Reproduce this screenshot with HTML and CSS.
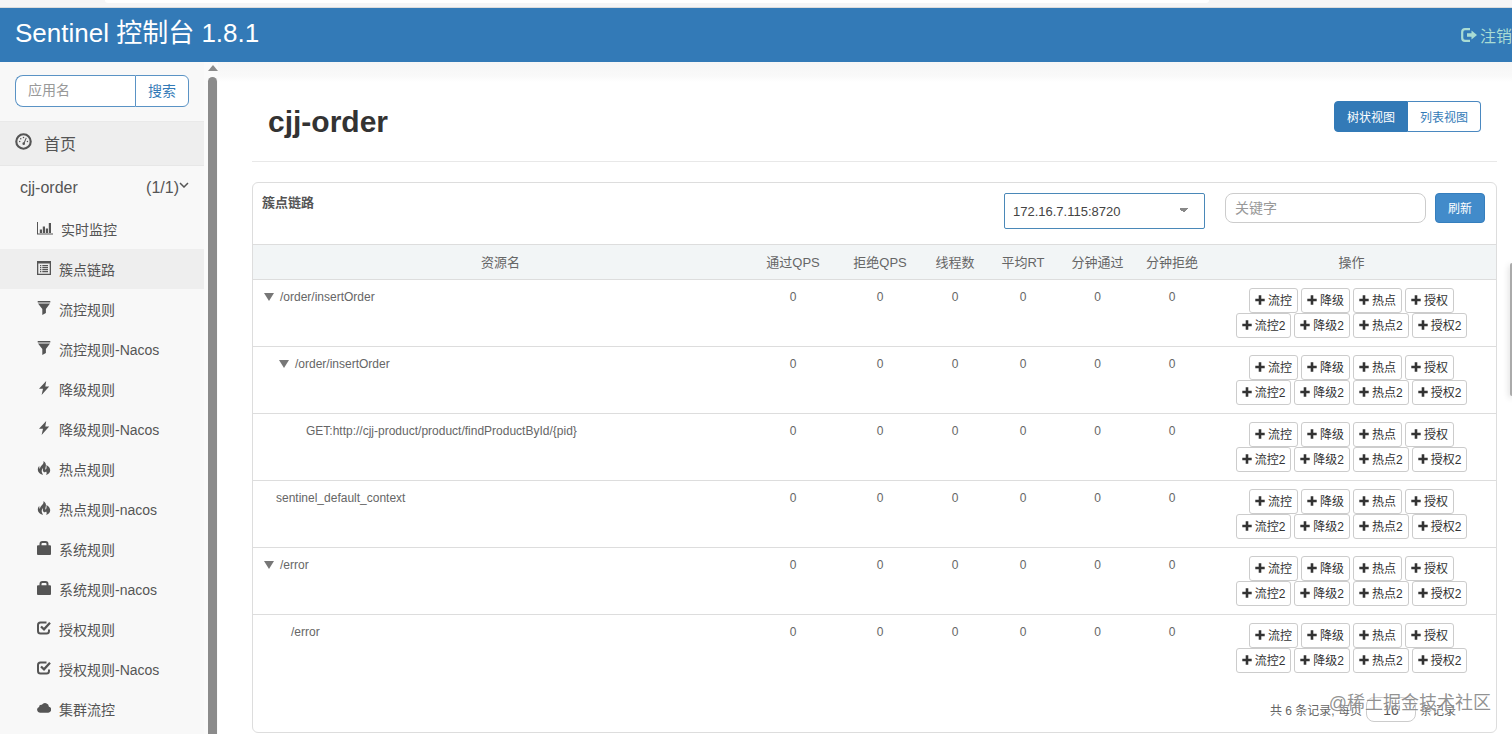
FILE: index.html
```html
<!DOCTYPE html>
<html lang="zh-CN">
<head>
    <meta charset="UTF-8">
    <meta name="viewport" content="width=device-width, initial-scale=1.0">
    <title>Sentinel 控制台</title>
    <link rel="stylesheet" href="styles.css">
</head>
<body>
    <!-- icons -->
    <svg class="sprite" aria-hidden="true">
        <symbol id="i-dashboard" viewBox="0 0 16 16">
            <circle cx="8" cy="8" r="6.8" fill="none" stroke="currentColor" stroke-width="2"/>
            <path d="M8.4 9.8 10.6 4.6" stroke="currentColor" stroke-width="1"/>
            <circle cx="8.2" cy="10" r="1.2"/><circle cx="4.400" cy="8" r=".7"/><circle cx="5.400" cy="5.500" r=".7"/><circle cx="8" cy="4.300" r=".7"/><circle cx="11.700" cy="8" r=".7"/>
        </symbol>
        <symbol id="i-stats" viewBox="0 0 16 14">
            <path d="M0 1h1v11.500h15v1H0zM2.800 8.500h2.200v3.500H2.800zM5.800 5.500H8v6.500H5.800zM8.800 7.500H11v4.500H8.800zM11.800 2H14v10h-2.200z"/>
        </symbol>
        <symbol id="i-list" viewBox="0 0 14 14">
            <path fill-rule="evenodd" d="M0 0h14v14H0zM1.300 2.500v10.200h11.400V2.500z"/>
            <path d="M3 4h1.300v1.200H3zM5.300 4H11v1.200H5.300zM3 6h1.300v1.200H3zM5.300 6H11v1.200H5.300zM3 8h1.300v1.200H3zM5.300 8H11v1.200H5.300zM3 10h1.300v1.200H3zM5.300 10H11v1.200H5.300z"/>
        </symbol>
        <symbol id="i-filter" viewBox="0 0 14 14">
            <path d="M.7 0h12.600v1.600H.7zM1 2.400h12L8.900 8v4L5.300 14V8z"/>
        </symbol>
        <symbol id="i-flash" viewBox="0 0 14 14">
            <path d="M9.200 0 2 7.800h4L4.600 14l7.600-8.600H8.300z"/>
        </symbol>
        <symbol id="i-fire" viewBox="0 0 14 14">
            <path d="M6.400 0C9 1.700 9.300 3.800 8.700 5.700 8.300 7 8.200 8 8.600 8.800c1-.9 1.200-2.700.7-4.900 2.900 1.400 4 3.600 3.900 5.700-.1 2.200-1.600 3.900-4.200 4.400.9-1.200.8-2.400.1-3.500-1 1.300-3 .7-3.200-1.100-.1-.9.100-1.600.1-2.300C4.900 8.200 4.400 10 4.900 11.400c.3 1 .8 1.700 1.400 2.400C3 13.400.8 11.500.8 8.800c0-1.500.6-2.900 1.500-4-.1 1.400 0 2.400.6 3.200C3 6.200 4 4.900 5.300 3.700 6.400 2.700 6.800 1.500 6.400 0z"/>
        </symbol>
        <symbol id="i-lock" viewBox="0 0 14 14">
            <path fill-rule="evenodd" d="M2.500 4.300V3Q2.500 0 5.500 0h3q3 0 3 3v1.300H13q1 0 1 1V13q0 1-1 1H1q-1 0-1-1V5.300q0-1 1-1zM4.500 4.300h5V3q0-1-1-1h-3q-1 0-1 1z"/>
        </symbol>
        <symbol id="i-check" viewBox="0 0 14 14">
            <path d="M9.500 1.500H3.500Q1 1.500 1 4v6q0 2.500 2.500 2.500h6Q12 12.500 12 10V8.500" fill="none" stroke="currentColor" stroke-width="2"/>
            <path d="m4 5.500 3 2.800 6-6.500" fill="none" stroke="currentColor" stroke-width="2.300"/>
        </symbol>
        <symbol id="i-cloud" viewBox="0 0 15 14">
            <path d="M3.200 12a3.200 3.200 0 0 1-1-6.200 2.500 2.500 0 0 1 3-2.300 4.200 4.200 0 0 1 7.600 2.200A3.200 3.200 0 0 1 11.900 12z"/>
        </symbol>
        <symbol id="i-plus" viewBox="0 0 10 10">
            <path d="M3.700.300h2.600v3.400h3.400v2.600H6.300v3.400H3.700V6.300H.300V3.700h3.400z"/>
        </symbol>
        <symbol id="i-logout" viewBox="0 0 16 14">
            <path d="M9 1.200H4Q1.200 1.200 1.200 4v6q0 2.800 2.800 2.800h5" fill="none" stroke="currentColor" stroke-width="2.200"/>
            <path d="M6 5.200h4.500V2.500L16 7l-5.500 4.500V8.800H6z"/>
        </symbol>
        <symbol id="i-down" viewBox="0 0 10 6">
            <path d="m1 1 4 4 4-4" fill="none" stroke="currentColor" stroke-width="1.500"/>
        </symbol>
    </svg>

    <div class="topstrip"><div class="topstrip-bar"></div></div>

    <header class="navbar">
        <a class="brand" href="#">Sentinel 控制台 1.8.1</a>
        <a class="logout" href="#"><svg class="logout-icon"><use href="#i-logout"/></svg>注销</a>
    </header>

    <div class="wrapper">
        <nav class="sidebar">
            <form class="search">
                <input type="text" placeholder="应用名" aria-label="应用名">
                <button type="button">搜索</button>
            </form>
            <a class="home" href="#"><svg class="home-icon"><use href="#i-dashboard"/></svg>首页</a>
            <a class="app" href="#"><span>cjj-order</span><span class="count">(1/1)<svg class="caret"><use href="#i-down"/></svg></span></a>
            <ul class="menu">
                <li><a class="wide" href="#"><svg><use href="#i-stats"/></svg>实时监控</a></li>
                <li><a class="active" href="#"><svg><use href="#i-list"/></svg>簇点链路</a></li>
                <li><a href="#"><svg><use href="#i-filter"/></svg>流控规则</a></li>
                <li><a href="#"><svg><use href="#i-filter"/></svg>流控规则-Nacos</a></li>
                <li><a href="#"><svg><use href="#i-flash"/></svg>降级规则</a></li>
                <li><a href="#"><svg><use href="#i-flash"/></svg>降级规则-Nacos</a></li>
                <li><a href="#"><svg><use href="#i-fire"/></svg>热点规则</a></li>
                <li><a href="#"><svg><use href="#i-fire"/></svg>热点规则-nacos</a></li>
                <li><a href="#"><svg><use href="#i-lock"/></svg>系统规则</a></li>
                <li><a href="#"><svg><use href="#i-lock"/></svg>系统规则-nacos</a></li>
                <li><a href="#"><svg><use href="#i-check"/></svg>授权规则</a></li>
                <li><a href="#"><svg><use href="#i-check"/></svg>授权规则-Nacos</a></li>
                <li><a href="#"><svg><use href="#i-cloud"/></svg>集群流控</a></li>
            </ul>
        </nav>
        <div class="scroll">
            <div class="scroll-up"></div>
            <div class="scroll-thumb"></div>
        </div>

        <main class="content">
            <div class="page-head">
                <h1>cjj-order</h1>
                <div class="views">
                    <button type="button" class="on">树状视图</button>
                    <button type="button">列表视图</button>
                </div>
            </div>

            <section class="card">
                <div class="card-head">
                    <h2>簇点链路</h2>
                    <select class="machine" aria-label="机器">
                        <option>172.16.7.115:8720</option>
                    </select>
                    <input class="keyword" type="text" placeholder="关键字" aria-label="关键字">
                    <button type="button" class="refresh">刷新</button>
                </div>
                <table>
                    <colgroup>
                        <col>
                        <col class="c-pass">
                        <col class="c-block">
                        <col class="c-thread">
                        <col class="c-rt">
                        <col class="c-mpass">
                        <col class="c-mblock">
                        <col class="c-op">
                    </colgroup>
                    <thead>
                        <tr>
                            <th>资源名</th>
                            <th>通过QPS</th>
                            <th>拒绝QPS</th>
                            <th>线程数</th>
                            <th>平均RT</th>
                            <th>分钟通过</th>
                            <th>分钟拒绝</th>
                            <th>操作</th>
                        </tr>
                    </thead>
                    <tbody id="rows"></tbody>
                </table>
                <div class="card-foot">
                    <label for="size">共 6 条记录, 每页</label>
                    <input id="size" type="text" value="16">
                    <span>条记录</span>
                    <div class="watermark">@稀土掘金技术社区</div>
                </div>
            </section>
        </main>
    </div>
    <div class="page-thumb"></div>

    <script src="script.js"></script>
</body>
</html>
```
FILE: styles.css
```css
* {
    box-sizing: border-box;
}

body {
    display: flex;
    flex-direction: column;
    height: 100vh;
    margin: 0;
    overflow: hidden;
    font-family: "Liberation Sans", "Noto Sans CJK SC", sans-serif;
    font-size: 12px;
    color: #666;
    background-color: #fff;
}

a {
    color: inherit;
    text-decoration: none;
}

button,
input,
select {
    font-family: inherit;
    margin: 0;
}

svg {
    fill: currentColor;
    flex-shrink: 0;
}

.sprite {
    position: absolute;
    width: 0;
    height: 0;
}

.topstrip {
    flex: 0 0 8px;
    background-color: #f5f5f6;
    border-bottom: 1px solid #dcdcdc;
}

.topstrip-bar {
    width: 73%;
    height: 3px;
    margin-left: 105px;
    background-color: #fff;
    border-radius: 0 0 8px 8px;
}

.navbar {
    display: flex;
    flex: 0 0 54px;
    align-items: flex-start;
    justify-content: space-between;
    padding-left: 15px;
    background-color: #337ab7;
}

.brand {
    font-size: 26px;
    line-height: 50px;
    color: #fff;
}

.logout {
    display: flex;
    align-items: center;
    gap: 3px;
    height: 54px;
    font-size: 16px;
    color: #a9dcd4;
}

.logout-icon {
    width: 16px;
    height: 14px;
}

.wrapper {
    display: flex;
    flex: 1;
    min-height: 0;
}

/* sidebar */
.sidebar {
    flex: 0 0 204px;
    overflow: hidden;
    color: #555;
    background-color: #f8f8f8;
}

.search {
    display: flex;
    height: 32px;
    margin: 13px 15px 14px;
}

.search input {
    flex: 1;
    min-width: 0;
    padding: 0 12px 2px;
    font-size: 14px;
    border: 1px solid #5a93c5;
    border-right: 0;
    border-radius: 8px 0 0 8px;
}

.search button {
    width: 54px;
    padding: 0 0 3px;
    font-size: 14px;
    color: #337ab7;
    background-color: #fff;
    border: 1px solid #5a93c5;
    border-radius: 0 6px 6px 0;
}

::placeholder {
    color: #999;
    opacity: 1;
}

.home {
    display: flex;
    align-items: center;
    gap: 12px;
    height: 45px;
    padding: 0 0 2px 15px;
    font-size: 16px;
    background-color: #eee;
    border-top: 1px solid #e9e9e9;
    border-bottom: 1px solid #e7e7e7;
}

.home-icon {
    width: 17px;
    height: 17px;
    margin-bottom: 2px;
}

.app {
    display: flex;
    justify-content: space-between;
    height: 43px;
    padding: 0 15px 0 20px;
    font-size: 16px;
    line-height: 43px;
}

.caret {
    width: 10px;
    height: 6px;
    vertical-align: 5px;
}

.menu {
    margin: 0;
    padding: 0;
    list-style: none;
}

.menu a {
    display: flex;
    align-items: center;
    gap: 8px;
    height: 40px;
    padding-left: 37px;
    font-size: 14px;
}

.menu .active {
    background-color: #eee;
}

.menu svg {
    width: 14px;
    height: 14px;
    margin-bottom: 2px;
}

.menu .wide svg {
    width: 16px;
}

.scroll {
    flex: 0 0 14px;
    display: flex;
    flex-direction: column;
    align-items: center;
    padding: 3px 0 0 3px;
    background-color: #fafafa;
}

.scroll-up {
    margin-bottom: 6px;
    border: 5px solid transparent;
    border-top: 0;
    border-bottom: 6px solid #8b8b8b;
}

.scroll-thumb {
    flex: 1;
    width: 9px;
    background-color: #8b8b8b;
    border-radius: 5px 5px 0 0;
}

/* content */
.content {
    flex: 1;
    min-width: 0;
    padding: 0 15px 0 34px;
    background: linear-gradient(#f6f6f6, #f9f9f9 14px, #fff 20px);
}

.page-head {
    display: flex;
    align-items: flex-start;
    justify-content: space-between;
    height: 100px;
    margin-bottom: 20px;
    padding: 39px 16px 0;
    border-bottom: 1px solid #e8e8e8;
}

h1 {
    margin: 0;
    font-size: 30px;
    line-height: 42px;
    color: #333;
}

.views {
    display: flex;
}

.views button {
    width: 73px;
    height: 31px;
    padding: 0;
    font-size: 12px;
    color: #337ab7;
    background-color: #fff;
    border: 1px solid #4a88c0;
    border-left: 0;
    border-radius: 0 4px 4px 0;
}

.views .on {
    width: 74px;
    color: #fff;
    background-color: #337ab7;
    border: 1px solid #337ab7;
    border-radius: 4px 0 0 4px;
}

.card {
    border: 1px solid #ddd;
    border-radius: 6px;
}

.card-head {
    display: flex;
    align-items: flex-start;
    height: 61px;
    padding: 10px 11px 0 9px;
}

h2 {
    flex: 1;
    margin: 0;
    font-size: 13px;
    line-height: 20px;
    color: #555;
}

.machine {
    width: 201px;
    height: 36px;
    margin-right: 20px;
    padding: 0 8px;
    font-size: 13px;
    color: #444;
    appearance: none;
    background: linear-gradient(to bottom right, #888 50%, transparent 50%) 179px 14px / 5px 5px no-repeat,
        linear-gradient(to bottom left, #888 50%, transparent 50%) 174px 14px / 5px 5px no-repeat,
        #fff;
    border: 1px solid #4a88b8;
    border-radius: 2px;
}

.keyword {
    width: 201px;
    height: 30px;
    margin-right: 9px;
    padding: 0 9px;
    font-size: 14px;
    border: 1px solid #ccc;
    border-radius: 8px;
}

.refresh {
    width: 50px;
    height: 30px;
    padding: 0 0 2px;
    font-size: 12px;
    color: #fff;
    background-color: #428bca;
    border: 1px solid #357ebd;
    border-radius: 4px;
}

table {
    width: 100%;
    table-layout: fixed;
    border-collapse: collapse;
}

.c-pass {
    width: 90px;
}

.c-block {
    width: 84px;
}

.c-thread {
    width: 66px;
}

.c-rt,
.c-mblock {
    width: 70px;
}

.c-mpass {
    width: 79px;
}

.c-op {
    width: 289px;
}

th {
    height: 35px;
    padding: 0 0 2px;
    font-size: 13px;
    font-weight: normal;
    background-color: #f2f5f6;
    border-top: 1px solid #ddd;
    border-bottom: 1px solid #ddd;
}

td {
    height: 67px;
    padding: 8px 0;
    text-align: center;
    vertical-align: top;
    line-height: 18px;
    border-bottom: 1px solid #ddd;
}

tbody tr:last-child td {
    border-bottom: 0;
}

.name {
    text-align: left;
}

.node {
    display: flex;
    align-items: center;
    padding-left: 23px;
}

.node.open {
    padding-left: 11px;
}

.level-1 {
    margin-left: 15px;
}

.level-2 {
    margin-left: 30px;
}

.arrow {
    margin-right: 6px;
    border: 5px solid transparent;
    border-top: 8px solid #777;
    border-bottom: 0;
}

.ops {
    display: flex;
    justify-content: center;
    gap: 3px;
}

.ops button {
    display: flex;
    align-items: center;
    gap: 3px;
    height: 25px;
    padding: 0 5px 2px;
    font-size: 12px;
    color: #333;
    background-color: #fff;
    border: 1px solid #ccc;
    border-radius: 3px;
}

.ops svg {
    width: 10px;
    height: 10px;
}

.card-foot {
    position: relative;
    display: flex;
    align-items: center;
    justify-content: flex-end;
    gap: 4px;
    height: 50px;
    padding: 6px 40px 0 0;
}

.card-foot input {
    width: 50px;
    height: 25px;
    padding: 0;
    font-size: 14px;
    text-align: center;
    color: #555;
    border: 1px solid #ccc;
    border-radius: 8px;
}

/* watermark lies over the pager */
.watermark {
    position: absolute;
    right: 5px;
    top: 8px;
    font-size: 18px;
    line-height: 26px;
    color: rgba(110, 110, 110, 0.75);
    text-shadow: 0 0 2px #fff;
}

.page-thumb {
    position: fixed;
    top: 263px;
    right: 0;
    width: 2px;
    height: 133px;
    background-color: #aaa;
    border-radius: 2px 0 0 2px;
    box-shadow: 0 2px 6px rgba(0, 0, 0, 0.3);
}
```
FILE: script.js
```js
const rows = [
    { name: '/order/insertOrder', level: 0, open: true },
    { name: '/order/insertOrder', level: 1, open: true },
    { name: 'GET:http://cjj-product/product/findProductById/{pid}', level: 2 },
    { name: 'sentinel_default_context', level: 0 },
    { name: '/error', level: 0, open: true },
    { name: '/error', level: 1 }
];
const actions = ['流控', '降级', '热点', '授权'];

function buttons(suffix) {
    return '<div class="ops">' + actions.map(a =>
        `<button type="button"><svg><use href="#i-plus"/></svg>${a}${suffix}</button>`
    ).join('') + '</div>';
}

document.getElementById('rows').innerHTML = rows.map(r => `
    <tr>
        <td class="name"><div class="node level-${r.level} ${r.open ? 'open' : ''}">${r.open ? '<span class="arrow"></span>' : ''}${r.name}</div></td>
        ${'<td>0</td>'.repeat(6)}
        <td>${buttons('')}${buttons('2')}</td>
    </tr>`).join('');
```
